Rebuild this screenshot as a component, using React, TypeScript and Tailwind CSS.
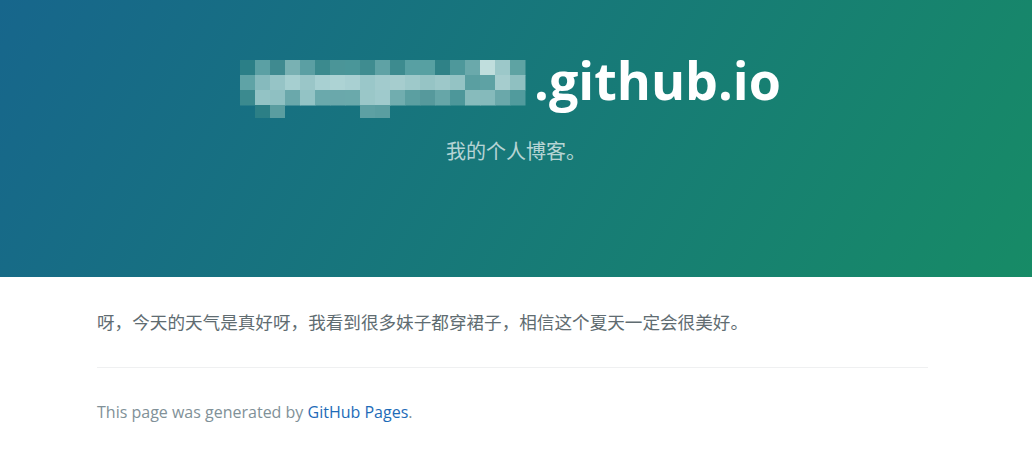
const mosaic: string[][] = [
  ['#2b7f87', '#5ba0a4', '#3f8a90', '#79b1b3', '#5b9fa3', '#3b8a8e', '#4b9598', '#4a9699', '#3f8c90', '#5fa2a5', '#3d8b8f', '#58a0a3', '#57a0a2', '#2f8287', '#4e989b', '#6aa9ab', '#c0dedd', '#9cc8c9', '#5ea3a3'],
  ['#5fa3a6', '#86babd', '#96c4c6', '#a6cfd0', '#9ac6c8', '#a8d0d2', '#add3d4', '#a9d0d2', '#9ac7c9', '#a2cbcd', '#a6cdce', '#9ec9ca', '#96c4c5', '#9dc8c9', '#94c3c4', '#5a9fa1', '#5ea2a4', '#a6cdce', '#8fc0c1'],
  ['#3b8a8f', '#93c3c5', '#8fc0c2', '#6aa8ab', '#93c3c5', '#6aa9ac', '#6aa8ab', '#6aa9ab', '#9ac7c8', '#9fcacc', '#71adaf', '#5b9fa1', '#56999c', '#66a6a8', '#4d979a', '#87bbbc', '#85babb', '#6aa8aa', '#519b9d'],
];

// partial cells under the main rows (descenders)
const extra: { col: number; color: string }[] = [
  { col: 1, color: '#2c7f86' },
  { col: 2, color: '#5a9da0' },
  { col: 8, color: '#5da0a3' },
  { col: 9, color: '#5a9ea1' },
];

function Mosaic() {
  return (
    <svg width="294" height="62" viewBox="0 0 294 62" className="block">
      {mosaic.map((row, r) =>
        row.map((c, i) => (
          <rect key={`${r}-${i}`} x={i * 15} y={2 + r * 15} width="15.5" height="15.5" fill={c} />
        ))
      )}
      {extra.map((e) => (
        <rect key={e.col} x={e.col * 15} y={47} width="15" height="13" fill={e.color} />
      ))}
    </svg>
  );
}

export default function App() {
  return (
    <div className="min-h-screen bg-white font-['Open_Sans','Noto_Sans_CJK_SC',sans-serif]">
      {/* Header */}
      <section className="h-[277px] bg-[linear-gradient(120deg,#17668c,#178b66)] text-white flex flex-col items-center pt-[41px]">
        <h1 className="flex items-start pr-[11px] text-[52px] leading-[78px] font-bold">
          <span className="mt-[17px]">
            <Mosaic />
          </span>
          <span>.github.io</span>
        </h1>
        <p className="mt-[16px] text-[20px] leading-[30px] text-white/70 font-['Noto_Sans_CJK_SC',sans-serif]">
          我的个人博客。
        </p>
      </section>

      {/* Main content */}
      <section className="pt-8 pl-[97px] pr-[104px] text-[#606c71]">
        <p className="text-[17.6px] leading-[26.4px] font-['Noto_Sans_CJK_SC',sans-serif]">
          呀，今天的天气是真好呀，我看到很多妹子都穿裙子，相信这个夏天一定会很美好。
        </p>
        <footer className="mt-8 pt-8 border-t border-[#eff0f1] text-[16px] leading-[24px]">
          <span className="text-[#819198]">
            This page was generated by <a href="#" className="text-[#1e6bb8]">GitHub Pages</a>.
          </span>
        </footer>
      </section>
    </div>
  );
}
